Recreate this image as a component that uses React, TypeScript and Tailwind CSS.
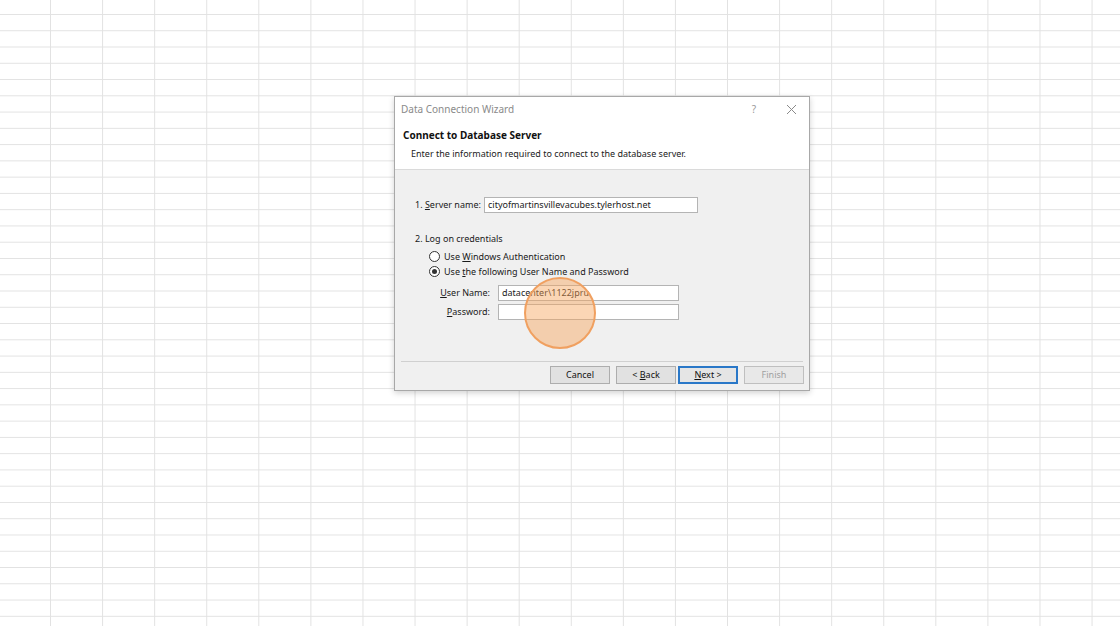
import React from 'react'

const font = { fontFamily: '"Segoe UI", "Noto Sans", sans-serif' }

function Radio({ checked }: { checked?: boolean }) {
  return (
    <span className="flex h-[11px] w-[11px] shrink-0 items-center justify-center rounded-full border border-[#333] bg-white">
      {checked && <span className="h-[5px] w-[5px] rounded-full bg-[#333]" />}
    </span>
  )
}

function Btn({ children, primary, disabled }: { children: React.ReactNode; primary?: boolean; disabled?: boolean }) {
  return (
    <div
      className={`flex h-[18px] w-[60px] items-center justify-center text-[9px] ${
        primary ? 'border-2 border-[#2a78c8] bg-[#e5e5e5]' : 'border border-[#adadad] bg-[#e1e1e1]'
      } ${disabled ? 'text-[#a0a0a0] border-[#bfbfbf] bg-[#e8e8e8]' : 'text-[#111]'}`}
    >
      <span className="whitespace-pre">{children}</span>
    </div>
  )
}

export default function App() {
  return (
    <div
      className="relative h-[626px] w-[1120px] overflow-hidden bg-white bg-[linear-gradient(to_right,#e2e2e2_1px,transparent_1px),linear-gradient(to_bottom,#e2e2e2_1px,transparent_1px)] bg-[size:52.08px_16.27px] bg-[position:50px_14px]"
      style={font}
    >
      <div className="ml-[394px] pt-[96px]">
        <div className="flex h-[295px] w-[416px] flex-col border border-[#a8a8a8] bg-white shadow-[0_2px_6px_rgba(0,0,0,0.18)]">
          {/* title bar */}
          <div className="flex h-[24px] items-center pl-[6px] pr-[12px] text-[10px] text-[#8a8a8a]">
            <span className="flex-1">Data Connection Wizard</span>
            <span className="mr-[30px] text-[10px] text-[#9a9a9a]">?</span>
            <svg width="11" height="11" viewBox="0 0 11 11" className="stroke-[#8a8a8a]">
              <path d="M1 1L10 10M10 1L1 10" strokeWidth="1" fill="none" />
            </svg>
          </div>

          {/* header */}
          <div className="flex h-[49px] flex-col border-b border-[#dadada] pl-[8px] pt-[7px]">
            <div className="text-[10px] font-bold leading-[14px] text-[#111]">Connect to Database Server</div>
            <div className="mt-[5px] pl-[8px] text-[9px] leading-[14px] text-[#222]">
              Enter the information required to connect to the database server.
            </div>
          </div>

          {/* body */}
          <div className="flex flex-1 flex-col bg-[#f0f0f0] text-[9px] text-[#1a1a1a]">
            <div className="flex flex-1 flex-col pl-[20px] pt-[27px]">
              <div className="flex h-[16px] items-center">
                <span className="w-[69px] shrink-0 whitespace-nowrap">
                  1. <span className="underline">S</span>erver name:
                </span>
                <div className="flex h-[16px] w-[214px] items-center whitespace-nowrap border border-[#b4b4b4] bg-white pl-[3px]">
                  cityofmartinsvillevacubes.tylerhost.net
                </div>
              </div>

              <div className="mt-[19px] leading-[14px]">2. Log on credentials</div>

              <div className="mt-[3px] flex h-[15px] items-center gap-[4px] pl-[14px]">
                <Radio />
                <span className="whitespace-nowrap">
                  Use <span className="underline">W</span>indows Authentication
                </span>
              </div>
              <div className="flex h-[15px] items-center gap-[4px] pl-[14px]">
                <Radio checked />
                <span className="whitespace-nowrap">
                  Use <span className="underline">t</span>he following User Name and Password
                </span>
              </div>

              <div className="mt-[6px] flex h-[16px] items-center">
                <span className="w-[76px] shrink-0 whitespace-nowrap pr-[1px] text-right">
                  <span className="underline">U</span>ser Name:
                </span>
                <div className="ml-[7px] flex h-[16px] w-[181px] items-center whitespace-nowrap border border-[#b4b4b4] bg-white pl-[3px]">
                  datacenter\1122jpru
                </div>
              </div>
              <div className="mt-[3px] flex h-[16px] items-center">
                <span className="w-[76px] shrink-0 whitespace-nowrap pr-[1px] text-right">
                  <span className="underline">P</span>assword:
                </span>
                <div className="ml-[7px] h-[16px] w-[181px] border border-[#b4b4b4] bg-white" />
              </div>
            </div>

            <div className="mx-[6px] border-t border-[#d0d0d0]" />
            <div className="flex h-[28px] items-start justify-end gap-[6px] pr-[5px] pt-[4px]">
              <Btn>Cancel</Btn>
              <div className="flex gap-[2px]">
                <Btn>
                  {'< '}
                  <span className="underline">B</span>ack
                </Btn>
                <Btn primary>
                  <span className="underline">N</span>
                  {'ext >'}
                </Btn>
              </div>
              <Btn disabled>Finish</Btn>
            </div>
          </div>
        </div>
      </div>

      {/* click highlight */}
      <div className="absolute left-[524px] top-[277px] h-[72px] w-[72px] rounded-full border-[2px] border-[#f0a060] bg-[#f7a55c]/45" />
    </div>
  )
}
